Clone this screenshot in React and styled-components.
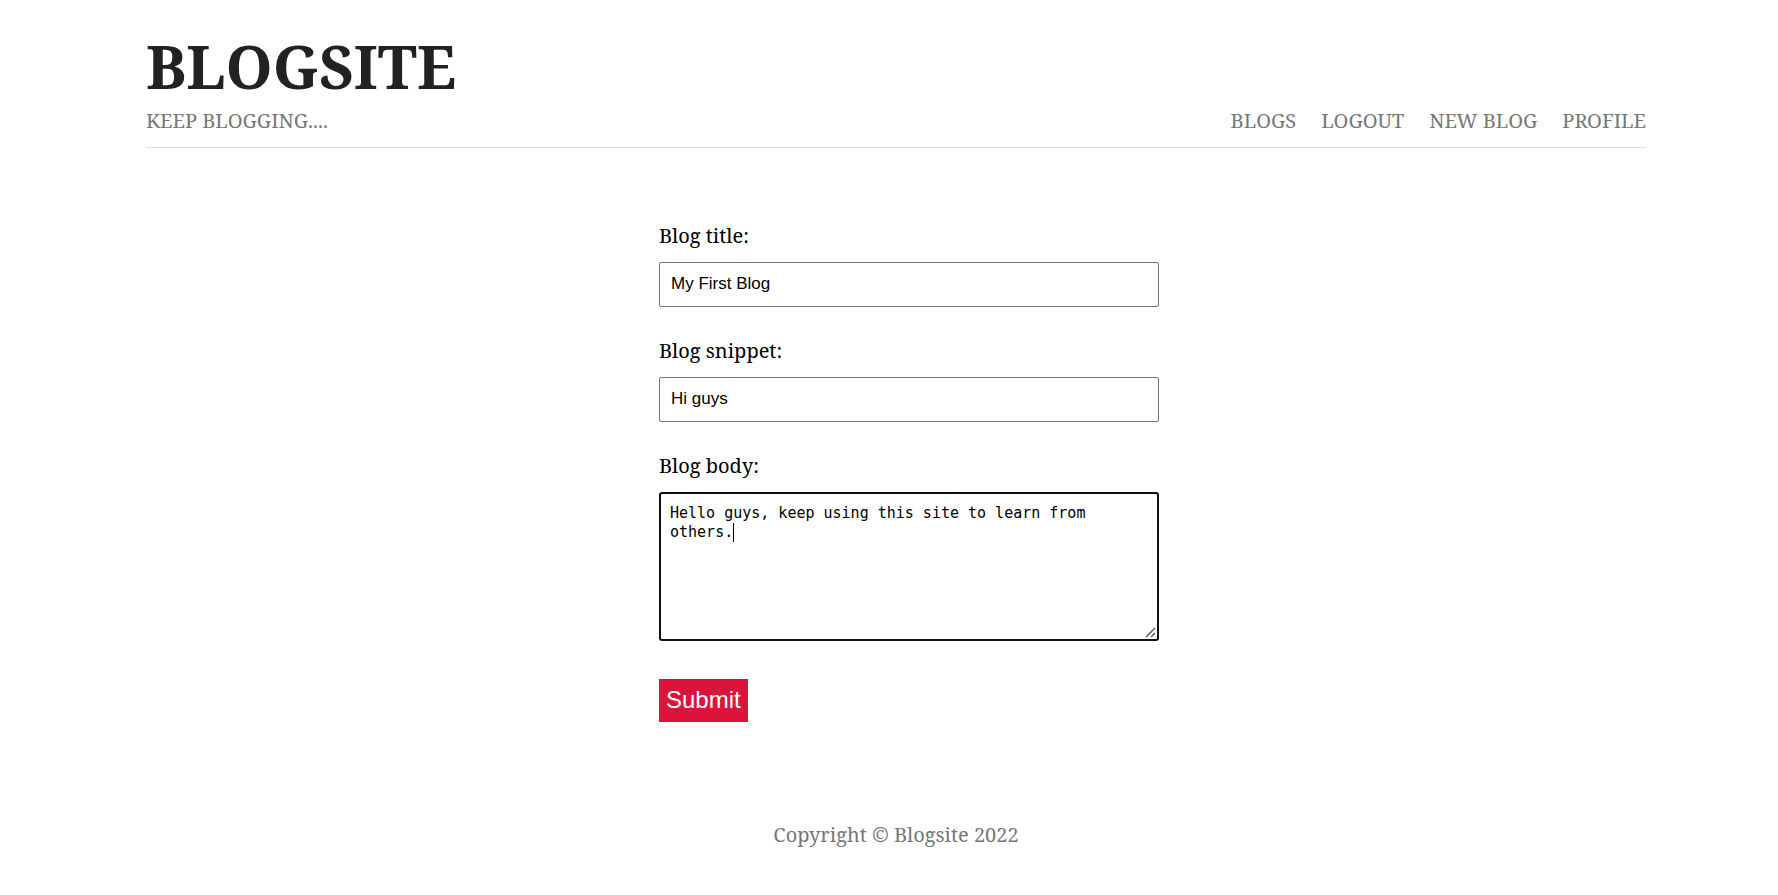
import React, { useEffect, useRef } from "react";
import styled, { createGlobalStyle } from "styled-components";

const GlobalStyle = createGlobalStyle`
  *, *::before, *::after { box-sizing: border-box; }
  body {
    margin: 0;
    padding: 0 0 0 14px;
    background: #fff;
    color: #000;
    font-family: "Noto Serif", "Liberation Serif", serif;
    font-size: 20px;
    line-height: 30px;
  }
`;

const Page = styled.div`
  max-width: 1500px;
  margin: 0 auto;
  padding-top: 36px;
`;

const Header = styled.header`
  display: flex;
  justify-content: space-between;
  align-items: flex-end;
  padding-bottom: 14px;
  border-bottom: 1px solid #ddd;
  color: #777;
  line-height: 24px;
  text-transform: uppercase;
`;

const Title = styled.h1`
  margin: 0 0 13px;
  color: #222;
  font-size: 60px;
  line-height: 60px;
`;

const Tagline = styled.p`
  margin: 0;
`;

const Nav = styled.nav`
  display: flex;
  gap: 25px;
`;

const NavLink = styled.a`
  color: inherit;
  text-decoration: none;
`;

const Form = styled.form`
  display: flex;
  flex-direction: column;
  gap: 29px;
  width: 474px;
  margin: 73px auto 98px;
`;

const Field = styled.div`
  display: flex;
  flex-direction: column;
  gap: 11px;
  width: 500px;
`;

const TextInput = styled.input`
  height: 45px;
  padding: 0 11px 2px;
  border: 1px solid #767676;
  border-radius: 2px;
  background: #fff;
  color: #000;
  font-family: "Liberation Sans", Arial, sans-serif;
  font-size: 17px;
`;

const AreaFrame = styled.div`
  position: relative;
  display: flex;
`;

const TextArea = styled.textarea`
  flex: 1;
  height: 149px;
  padding: 10px 9px;
  border: 2px solid #101010;
  border-radius: 3px;
  outline: none;
  background: #fff;
  color: #000;
  caret-color: transparent;
  font-family: Consolas, "DejaVu Sans Mono", monospace;
  font-size: 15px;
  line-height: 19px;
  resize: none;
`;

const Caret = styled.span`
  position: absolute;
  top: 31px;
  left: 74px;
  width: 1px;
  height: 19px;
  background: #000;
  pointer-events: none;
`;

const Grip = styled.svg`
  position: absolute;
  right: 3px;
  bottom: 3px;
  pointer-events: none;
`;

const SubmitButton = styled.button`
  align-self: flex-start;
  height: 43px;
  margin-top: 9px;
  padding: 0 7px 2px;
  border: 0;
  background: crimson;
  color: #fff;
  font-family: "Liberation Sans", Arial, sans-serif;
  font-size: 24px;
  cursor: pointer;
`;

const Footer = styled.footer`
  padding-bottom: 40px;
  color: #777;
  text-align: center;
`;

const links = ["Blogs", "Logout", "New Blog", "Profile"];

export default function App() {
  const body = useRef(null);

  useEffect(() => {
    const el = body.current;
    el.focus();
    el.setSelectionRange(el.value.length, el.value.length);
  }, []);

  return (
    <>
      <GlobalStyle />
      <Page>
        <Header>
          <div>
            <Title>Blogsite</Title>
            <Tagline>Keep blogging....</Tagline>
          </div>
          <Nav>
            {links.map((label) => (
              <NavLink key={label} href="#">{label}</NavLink>
            ))}
          </Nav>
        </Header>
        <Form onSubmit={(e) => e.preventDefault()}>
          <Field>
            <label htmlFor="title">Blog title:</label>
            <TextInput id="title" type="text" defaultValue="My First Blog" />
          </Field>
          <Field>
            <label htmlFor="snippet">Blog snippet:</label>
            <TextInput id="snippet" type="text" defaultValue="Hi guys" />
          </Field>
          <Field>
            <label htmlFor="body">Blog body:</label>
            <AreaFrame>
              <TextArea
                id="body"
                ref={body}
                spellCheck={false}
                defaultValue="Hello guys, keep using this site to learn from others."
              />
              <Caret />
              <Grip width="11" height="11" viewBox="0 0 11 11" fill="none" stroke="#555" strokeWidth="1.4" aria-hidden="true">
                <path d="M1 10 10 1M6 10l4-4" />
              </Grip>
            </AreaFrame>
          </Field>
          <SubmitButton type="submit">Submit</SubmitButton>
        </Form>
        <Footer>Copyright © Blogsite 2022</Footer>
      </Page>
    </>
  );
}
